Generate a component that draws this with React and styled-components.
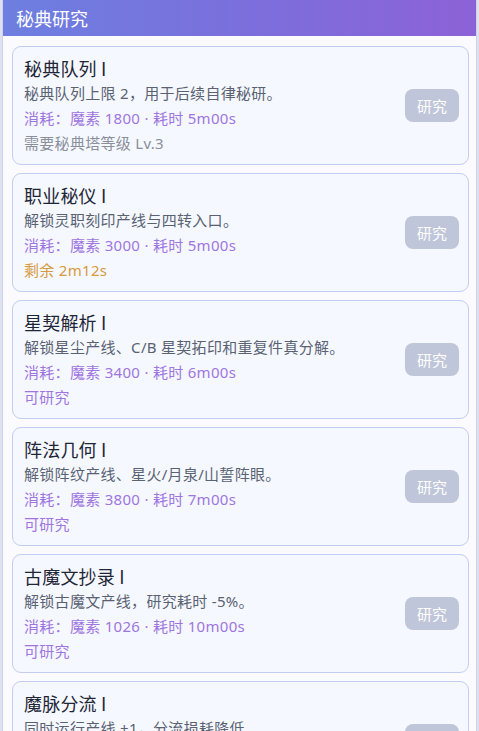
import React from "react";
import styled, { createGlobalStyle } from "styled-components";

const Global = createGlobalStyle`
  html, body { margin: 0; padding: 0; }
  body {
    background: #dfe2ee;
    font-family: "Noto Sans", "Noto Sans CJK SC", sans-serif;
    overflow: hidden;
  }
`;

const Panel = styled.div`
  margin: 0 2px 0 2px;
  border-left: 1px solid #cdd3ef;
  border-right: 1px solid #cdd3ef;
  background: #fbfaff;
  min-height: 731px;
  box-sizing: border-box;
`;

const Header = styled.div`
  height: 36px;
  display: flex;
  align-items: center;
  padding-left: 13px;
  background: linear-gradient(90deg, #6d7fe0 0%, #7b6fdc 50%, #8c62d7 100%);
  color: #ffffff;
  font-size: 18px;
  font-family: "Noto Sans CJK SC", sans-serif;
`;

const List = styled.div`
  display: flex;
  flex-direction: column;
  gap: 8px;
  padding: 10px 7px 10px 9px;
`;

const Card = styled.div`
  display: flex;
  align-items: center;
  height: 119px;
  box-sizing: border-box;
  padding: 8px 9px 8px 11px;
  border: 1px solid #c3cdf1;
  border-radius: 9px;
  background: #f5f8ff;
`;

const Info = styled.div`
  flex: 1;
  display: flex;
  flex-direction: column;
  min-width: 0;
`;

const Title = styled.div`
  font-family: "Noto Sans CJK SC", sans-serif;
  font-size: 18px;
  line-height: 26px;
  color: #1f2636;
  font-weight: 400;
  letter-spacing: 0.2px;
`;

const Line = styled.div`
  font-size: 15px;
  line-height: 25px;
  letter-spacing: 0.3px;
  color: ${(p) => p.$color || "#5a6272"};
  white-space: nowrap;
`;

const Button = styled.button`
  flex: none;
  height: 33px;
  padding: 0 12px;
  border: none;
  border-radius: 8px;
  background: #c0c6d9;
  color: #ffffff;
  font-size: 15px;
  font-family: "Noto Sans CJK SC", sans-serif;
  cursor: not-allowed;
`;

const PURPLE = "#9f76df";
const statusColor = { gray: "#8a8f9a", orange: "#d89a3e", purple: PURPLE };

const items = [
  {
    title: "秘典队列 I",
    desc: "秘典队列上限 2，用于后续自律秘研。",
    cost: "消耗：魔素 1800 · 耗时 5m00s",
    status: "需要秘典塔等级 Lv.3",
    tone: "gray",
  },
  {
    title: "职业秘仪 I",
    desc: "解锁灵职刻印产线与四转入口。",
    cost: "消耗：魔素 3000 · 耗时 5m00s",
    status: "剩余 2m12s",
    tone: "orange",
  },
  {
    title: "星契解析 I",
    desc: "解锁星尘产线、C/B 星契拓印和重复件真分解。",
    cost: "消耗：魔素 3400 · 耗时 6m00s",
    status: "可研究",
    tone: "purple",
  },
  {
    title: "阵法几何 I",
    desc: "解锁阵纹产线、星火/月泉/山誓阵眼。",
    cost: "消耗：魔素 3800 · 耗时 7m00s",
    status: "可研究",
    tone: "purple",
  },
  {
    title: "古魔文抄录 I",
    desc: "解锁古魔文产线，研究耗时 -5%。",
    cost: "消耗：魔素 1026 · 耗时 10m00s",
    status: "可研究",
    tone: "purple",
  },
  {
    title: "魔脉分流 I",
    desc: "同时运行产线 +1，分流损耗降低。",
    cost: "消耗：魔素 4200 · 耗时 8m00s",
    status: "可研究",
    tone: "purple",
  },
];

export default function App() {
  return (
    <>
      <Global />
      <Panel>
        <Header>秘典研究</Header>
        <List>
          {items.map((it) => (
            <Card key={it.title}>
              <Info>
                <Title>{it.title}</Title>
                <Line>{it.desc}</Line>
                <Line $color={PURPLE}>{it.cost}</Line>
                <Line $color={statusColor[it.tone]}>{it.status}</Line>
              </Info>
              <Button>研究</Button>
            </Card>
          ))}
        </List>
      </Panel>
    </>
  );
}
